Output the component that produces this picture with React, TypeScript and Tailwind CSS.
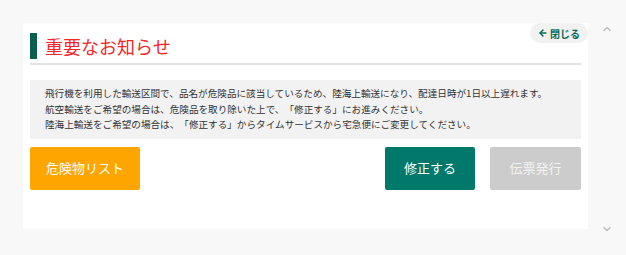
import { ArrowLeft, ChevronUp, ChevronDown } from 'lucide-react'

const jp = { fontFamily: '"Noto Sans CJK JP", "Noto Sans", sans-serif' }

export default function App() {
  return (
    <div className="w-[626px] h-[255px] bg-[#f8f8f8] flex pt-[23px] pl-[23px]" style={jp}>
      {/* カード */}
      <div className="relative w-[565px] h-[206px] bg-white px-[7px] pt-[10px]">
        <button className="absolute top-0 right-0 w-[58px] h-[20px] rounded-full bg-[#f1f1f1] flex items-center justify-center gap-[2px] text-[10px] font-bold text-[#0a6b55]">
          <ArrowLeft className="w-[10px] h-[10px]" strokeWidth={3.5} />
          <span>閉じる</span>
        </button>

        <div className="flex items-center gap-[8px] pb-[4px] border-b-2 border-[#e3e3e3]">
          <span className="w-[7px] h-[26px] bg-[#07614d]" />
          <h1 className="text-[18px] leading-[26px] text-[#f2262b]">重要なお知らせ</h1>
        </div>

        <div className="mt-[15px] bg-[#f2f2f2] px-[15px] py-[6px] text-[9.6px] leading-[15.5px] text-[#333] whitespace-nowrap [text-spacing-trim:space-all]">
          <p>飛行機を利用した輸送区間で、品名が危険品に該当しているため、陸海上輸送になり、配達日時が1日以上遅れます。</p>
          <p>航空輸送をご希望の場合は、危険品を取り除いた上で、「修正する」にお進みください。</p>
          <p>陸海上輸送をご希望の場合は、「修正する」からタイムサービスから宅急便にご変更してください。</p>
        </div>

        <div className="mt-[8px] flex">
          <button className="w-[110px] h-[43px] rounded-[2px] bg-[#ffa500] text-white text-[13px]">危険物リスト</button>
          <button className="ml-auto w-[90px] h-[43px] rounded-[2px] bg-[#00796b] text-white text-[13px]">修正する</button>
          <button className="ml-[15px] w-[91px] h-[43px] rounded-[2px] bg-[#cccccc] text-[#f2f2f2] text-[13px]">伝票発行</button>
        </div>
      </div>

      {/* スクロール */}
      <div className="w-[38px] h-[212px] flex flex-col items-center justify-between text-[#bbbbbb]">
        <ChevronUp className="w-[12px] h-[12px]" strokeWidth={2.5} />
        <ChevronDown className="w-[12px] h-[12px]" strokeWidth={2.5} />
      </div>
    </div>
  )
}
